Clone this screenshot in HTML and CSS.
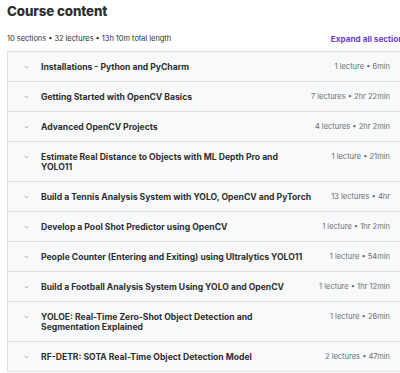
FILE: index.html
```html
<!DOCTYPE html>
<html lang="en">
<head>
  <meta charset="UTF-8" />
  <title>Course content</title>
  <link rel="stylesheet" href="styles.css">
</head>
<body>

  <div class="curriculum">
    <h2>Course content</h2>

    <div class="summary">
      <span>10 sections • 32 lectures • 13h 10m total length</span>
      <button type="button" class="expand">Expand all sections</button>
    </div>

    <div class="sections">
      <div class="section">
        <span class="chevron"><svg viewBox="0 0 8 5" width="5" height="4"><path d="M1 1l3 3 3-3" fill="none" stroke="currentColor" stroke-width="1.1"/></svg></span>
        <span class="title">Installations - Python and PyCharm</span>
        <span class="meta">1 lecture • 6min</span>
      </div>
      <div class="section">
        <span class="chevron"><svg viewBox="0 0 8 5" width="5" height="4"><path d="M1 1l3 3 3-3" fill="none" stroke="currentColor" stroke-width="1.1"/></svg></span>
        <span class="title">Getting Started with OpenCV Basics</span>
        <span class="meta">7 lectures • 2hr 22min</span>
      </div>
      <div class="section">
        <span class="chevron"><svg viewBox="0 0 8 5" width="5" height="4"><path d="M1 1l3 3 3-3" fill="none" stroke="currentColor" stroke-width="1.1"/></svg></span>
        <span class="title">Advanced OpenCV Projects</span>
        <span class="meta">4 lectures • 2hr 2min</span>
      </div>
      <div class="section">
        <span class="chevron"><svg viewBox="0 0 8 5" width="5" height="4"><path d="M1 1l3 3 3-3" fill="none" stroke="currentColor" stroke-width="1.1"/></svg></span>
        <span class="title">Estimate Real Distance to Objects with ML Depth Pro and<br>YOLO11</span>
        <span class="meta">1 lecture • 21min</span>
      </div>
      <div class="section">
        <span class="chevron"><svg viewBox="0 0 8 5" width="5" height="4"><path d="M1 1l3 3 3-3" fill="none" stroke="currentColor" stroke-width="1.1"/></svg></span>
        <span class="title">Build a Tennis Analysis System with YOLO, OpenCV and PyTorch</span>
        <span class="meta">13 lectures • 4hr</span>
      </div>
      <div class="section">
        <span class="chevron"><svg viewBox="0 0 8 5" width="5" height="4"><path d="M1 1l3 3 3-3" fill="none" stroke="currentColor" stroke-width="1.1"/></svg></span>
        <span class="title">Develop a Pool Shot Predictor using OpenCV</span>
        <span class="meta">1 lecture • 1hr 2min</span>
      </div>
      <div class="section">
        <span class="chevron"><svg viewBox="0 0 8 5" width="5" height="4"><path d="M1 1l3 3 3-3" fill="none" stroke="currentColor" stroke-width="1.1"/></svg></span>
        <span class="title">People Counter (Entering and Exiting) using Ultralytics YOLO11</span>
        <span class="meta">1 lecture • 54min</span>
      </div>
      <div class="section">
        <span class="chevron"><svg viewBox="0 0 8 5" width="5" height="4"><path d="M1 1l3 3 3-3" fill="none" stroke="currentColor" stroke-width="1.1"/></svg></span>
        <span class="title">Build a Football Analysis System Using YOLO and OpenCV</span>
        <span class="meta">1 lecture • 1hr 12min</span>
      </div>
      <div class="section">
        <span class="chevron"><svg viewBox="0 0 8 5" width="5" height="4"><path d="M1 1l3 3 3-3" fill="none" stroke="currentColor" stroke-width="1.1"/></svg></span>
        <span class="title">YOLOE: Real-Time Zero-Shot Object Detection and<br>Segmentation Explained</span>
        <span class="meta">1 lecture • 26min</span>
      </div>
      <div class="section">
        <span class="chevron"><svg viewBox="0 0 8 5" width="5" height="4"><path d="M1 1l3 3 3-3" fill="none" stroke="currentColor" stroke-width="1.1"/></svg></span>
        <span class="title">RF-DETR: SOTA Real-Time Object Detection Model</span>
        <span class="meta">2 lectures • 47min</span>
      </div>
    </div>
  </div>

</body>
</html>
```

FILE: styles.css
```css
body {
  margin: 0;
  padding: 0;
  background: #ffffff;
  color: #2d2f31;
  font-family: Inter, "Noto Sans", sans-serif;
  overflow: hidden;
}

.curriculum {
  width: 397px;
  padding-left: 7px;
}

h2 {
  margin: 0;
  padding-top: 2px;
  font-size: 13.3px;
  line-height: 18px;
  font-weight: 800;
  letter-spacing: -0.1px;
}

.summary {
  display: flex;
  justify-content: space-between;
  align-items: center;
  margin-top: 13px;
  margin-bottom: 6px;
  font-size: 7.4px;
  color: #2d2f31;
  line-height: 12px;
}

.expand {
  border: none;
  background: none;
  padding: 0;
  margin-right: -4px;
  font-family: inherit;
  font-size: 8.2px;
  font-weight: 700;
  color: #6d3fc8;
  cursor: pointer;
}

.sections {
  border: 1px solid #dde1e4;
  border-right: none;
}

.section {
  display: flex;
  align-items: flex-start;
  padding: 10px 14px 9px 16px;
  background: #f7f9fa;
  border-bottom: 1px solid #dde1e4;
  font-size: 8.6px;
  line-height: 10px;
}

.section:last-child {
  border-bottom: none;
}

.chevron {
  width: 17px;
  flex-shrink: 0;
  color: #8a8f94;
  padding-top: 3px;
}

.chevron svg {
  display: block;
}

.title {
  flex: 1;
  font-weight: 700;
  padding-right: 6px;
}

.meta {
  flex-shrink: 0;
  font-size: 7.5px;
  color: #6a6f73;
  white-space: nowrap;
}
```
